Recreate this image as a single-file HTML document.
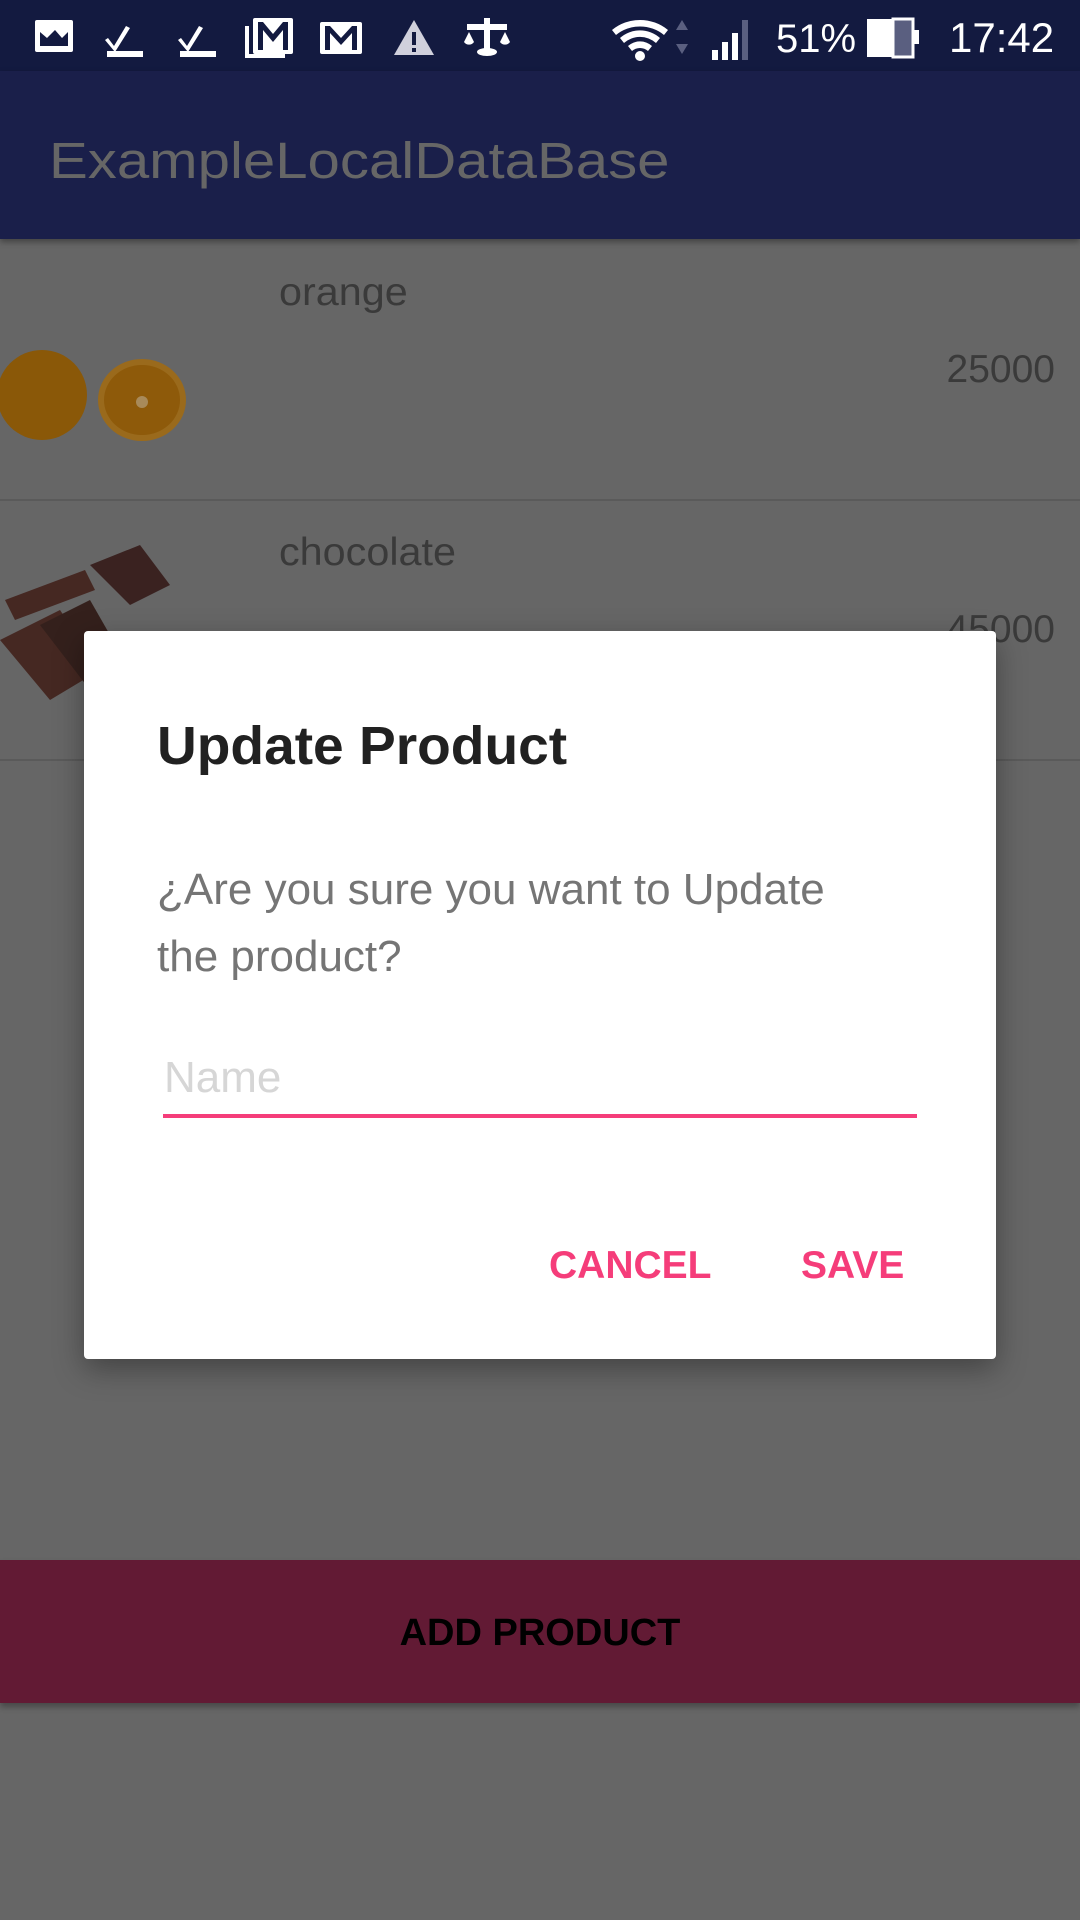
<!DOCTYPE html>
<html><head><meta charset="utf-8"><style>
*{margin:0;padding:0;box-sizing:border-box}
body{width:1080px;height:1920px;background:#666;position:relative;overflow:hidden;font-family:"Liberation Sans",sans-serif}
.abs{position:absolute}
.t{position:absolute;white-space:nowrap;line-height:1}
</style></head><body>
<div class="abs" style="left:0;top:0;width:1080px;height:71px;background:#131a40"></div>
<div class="abs" style="left:0;top:71px;width:1080px;height:168px;background:#1a1f4a;box-shadow:0 3px 6px rgba(0,0,0,.35)"></div>
<svg class="abs" style="left:0;top:0" width="1080" height="71">
<g fill="#fff">
<rect x="35" y="20" width="38" height="32" rx="2"/><path d="M40 46 L40 32 L47 38 L55 30 L62 38 L68 32 L68 46Z" fill="#131a40"/>
<path d="M108 38 l6 8 l12 -20 l4 2 l-15 24 l-10 -12z"/><rect x="107" y="51" width="36" height="6"/>
<path d="M181 38 l6 8 l12 -20 l4 2 l-15 24 l-10 -12z"/><rect x="180" y="51" width="36" height="6"/>
<rect x="253" y="18" width="40" height="36" rx="2"/><path d="M258 22 v28 h5 v-20 l10 12 l10 -12 v20 h5 v-28 h-5 l-10 12 l-10 -12z" fill="#131a40"/><rect x="245" y="26" width="4" height="32"/><rect x="245" y="54" width="40" height="4"/>
<rect x="320" y="22" width="42" height="32" rx="2"/><path d="M325 26 v24 h5 v-17 l11 12 l11 -12 v17 h5 v-24 h-5 l-11 12 l-11 -12z" fill="#131a40"/>
<path d="M414 20 L434 55 L394 55Z" fill="#d0d0dc"/><rect x="412" y="32" width="4" height="13" fill="#131a40"/><rect x="412" y="48" width="4" height="4" fill="#131a40"/>
<rect x="467" y="24" width="40" height="6"/><rect x="484" y="18" width="6" height="36"/><path d="M469 32 l-5 10 a6 6 0 0 0 10 0z"/><path d="M505 32 l-5 10 a6 6 0 0 0 10 0z"/><ellipse cx="487" cy="52" rx="10" ry="4"/>
<path d="M612 30 a44 44 0 0 1 56 0 l-4 5 a38 38 0 0 0 -48 0z"/><path d="M620 38 a30 30 0 0 1 40 0 l-4 5 a24 24 0 0 0 -32 0z"/><path d="M628 46 a18 18 0 0 1 24 0 l-4 5 a12 12 0 0 0 -16 0z"/><ellipse cx="640" cy="56" rx="5" ry="5"/>
<path d="M676 30 l6 -10 l6 10z" fill="#5a5f80"/><path d="M676 44 l6 10 l6 -10z" fill="#5a5f80"/>
<rect x="712" y="50" width="6" height="10"/><rect x="722" y="42" width="6" height="18"/><rect x="732" y="33" width="6" height="27"/><rect x="742" y="20" width="6" height="40" fill="#5a5f80"/>
<rect x="867" y="19" width="26" height="38"/><rect x="893" y="19" width="20" height="38" fill="#5a5f80" stroke="#fff" stroke-width="3"/><rect x="913" y="30" width="6" height="14"/>
</g>
<text x="776" y="52" fill="#fff" font-family="Liberation Sans" font-size="40">51%</text>
<text x="949" y="52" fill="#fff" font-family="Liberation Sans" font-size="42">17:42</text>
</svg>
<div class="t" style="left:49px;top:135px;font-size:51px;color:#666;transform:scaleX(1.14);transform-origin:left">ExampleLocalDataBase</div>
<div class="t" style="left:279px;top:273px;font-size:39px;color:#3a3a3a;transform:scaleX(1.06);transform-origin:left">orange</div>
<div class="t" style="right:25px;top:350px;font-size:39px;color:#3a3a3a">25000</div>
<div class="abs" style="left:0;top:499px;width:1080px;height:2px;background:#5a5a5a"></div>
<div class="t" style="left:279px;top:533px;font-size:39px;color:#3a3a3a;transform:scaleX(1.06);transform-origin:left">chocolate</div>
<div class="t" style="right:25px;top:610px;font-size:39px;color:#3a3a3a">45000</div>
<div class="abs" style="left:0;top:759px;width:1080px;height:2px;background:#5a5a5a"></div>
<svg class="abs" style="left:0;top:340px" width="200" height="400">
<circle cx="42" cy="55" r="45" fill="#8a5808"/>
<ellipse cx="142" cy="60" rx="44" ry="41" fill="#9a6a1c"/><ellipse cx="142" cy="60" rx="38" ry="35" fill="#8e5a0a"/><circle cx="142" cy="62" r="6" fill="#a88a5a"/>
<g fill="#452822"><path d="M5 260 l80 -30 l10 20 l-80 30z"/><path d="M90 225 l50 -20 l30 40 l-40 20z" fill="#3a2220"/><path d="M0 300 l60 -30 l40 60 l-50 30z"/><path d="M40 285 l50 -25 l40 70 l-40 20z" fill="#34201c"/></g>
</svg>
<div class="abs" style="left:84px;top:631px;width:912px;height:728px;background:#fff;border-radius:4px;box-shadow:0 10px 30px rgba(0,0,0,.35)"></div>
<div class="t" style="left:157px;top:719px;font-size:54px;font-weight:bold;color:#212121;transform:scaleX(1.02);transform-origin:left">Update Product</div>
<div class="abs" style="left:157px;top:856px;font-size:44px;line-height:67px;color:#757575;white-space:nowrap">¿Are you sure you want to Update<br>the product?</div>
<div class="t" style="left:164px;top:1056px;font-size:44px;color:#d6d6d6">Name</div>
<div class="abs" style="left:163px;top:1114px;width:754px;height:4px;background:#f53d7a"></div>
<div class="t" style="left:549px;top:1246px;font-size:39px;font-weight:bold;color:#f53d7a">CANCEL</div>
<div class="t" style="left:801px;top:1246px;font-size:39px;font-weight:bold;color:#f53d7a">SAVE</div>
<div class="abs" style="left:0;top:1560px;width:1080px;height:143px;background:#621a34;box-shadow:0 4px 6px rgba(0,0,0,.3)"></div>
<div class="t" style="left:0;width:1080px;text-align:center;top:1614px;font-size:38px;font-weight:bold;color:#000">ADD PRODUCT</div>
</body></html>
